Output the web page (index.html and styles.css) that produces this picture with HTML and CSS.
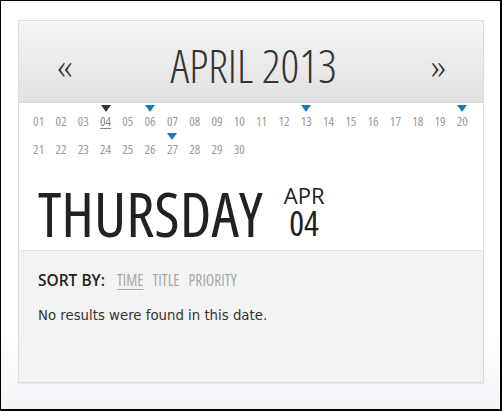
FILE: index.html
```html
<!DOCTYPE html>
<html>
<head>
<meta charset="utf-8">
<link rel="stylesheet" href="styles.css">
</head>
<body>
<div class="frame">
  <div class="card">
    <div class="header">
      <span class="nav">&laquo;</span>
      <span class="month">APRIL 2013</span>
      <span class="nav">&raquo;</span>
    </div>
    <div class="days">
      <span class="day">01</span><span class="day">02</span><span class="day">03</span><span class="day cur">04</span><span class="day">05</span><span class="day ev">06</span><span class="day">07</span><span class="day">08</span><span class="day">09</span><span class="day">10</span>
      <span class="day">11</span><span class="day">12</span><span class="day ev">13</span><span class="day">14</span><span class="day">15</span><span class="day">16</span><span class="day">17</span><span class="day">18</span><span class="day">19</span><span class="day ev">20</span>
      <span class="day">21</span><span class="day">22</span><span class="day">23</span><span class="day">24</span><span class="day">25</span><span class="day">26</span><span class="day ev">27</span><span class="day">28</span><span class="day">29</span><span class="day">30</span>
    </div>
    <div class="today">
      <span class="weekday">THURSDAY</span>
      <div class="date">
        <span class="mon">APR</span>
        <span class="num">04</span>
      </div>
    </div>
    <div class="results">
      <div class="sort">
        <span class="label">SORT BY:</span>
        <span class="opt active">TIME</span>
        <span class="opt">TITLE</span>
        <span class="opt">PRIORITY</span>
      </div>
      <p class="empty">No results were found in this date.</p>
    </div>
  </div>
</div>
</body>
</html>
```
FILE: styles.css
```css
html, body { margin: 0; padding: 0; }
body { width: 502px; height: 411px; overflow: hidden; }
.frame {
  box-sizing: border-box;
  width: 502px; height: 411px;
  border: 1px solid #000;
  border-right-width: 2px;
  border-bottom-width: 2px;
  background: linear-gradient(#ffffff 0, #ffffff 330px, #f3f5f8 100%);
  padding: 19px 16px 0 17px;
}
.card {
  width: 464px;
  height: 361px;
  border: 1px solid #dcdcdc;
  background: #fff;
  display: flex;
  flex-direction: column;
  box-shadow: 0 1px 1px rgba(0,0,0,0.05);
}
.header {
  height: 82px;
  flex: none;
  box-sizing: border-box;
  border-bottom: 1px solid #d6d6d6;
  background: linear-gradient(#f5f5f5, #e1e1e1);
  display: flex;
  align-items: center;
  justify-content: space-between;
  padding: 6px 37px 0 38px;
  font-family: "Open Sans", sans-serif;
  font-stretch: 75%;
  font-weight: 300;
  color: #333;
}
.nav { font-size: 37px; line-height: 1; padding-top: 2px; }
.month { font-size: 46px; line-height: 1; margin-left: 4px; }
.days {
  display: grid;
  flex: none;
  grid-template-columns: repeat(20, 22.3px);
  grid-auto-rows: 28px;
  padding: 10px 0 0 8.5px;
  font-family: "Open Sans", sans-serif;
  font-stretch: 75%;
  font-weight: 400;
  font-size: 13px;
  color: #9a9a9a;
}
.day { position: relative; text-align: center; line-height: 16px; }
.day.cur { text-decoration: underline; text-underline-offset: 2px; color: #888; }
.day.ev::before, .day.cur::before {
  content: "";
  position: absolute;
  top: -8px; left: 50%;
  margin-left: -5px;
  border-left: 5px solid transparent;
  border-right: 5px solid transparent;
  border-top: 7px solid #1b7ab4;
}
.day.cur::before { border-top-color: #333; }
.today {
  display: flex;
  align-items: flex-start;
  padding: 14px 0 0 19px;
  height: 84px;
  box-sizing: border-box;
  flex: none;
  border-bottom: 1px solid #e4e4e4;
  margin-top: -2px;
}
.weekday {
  font-family: "Open Sans", sans-serif;
  font-stretch: 75%;
  font-weight: 400;
  font-size: 62px;
  line-height: 64px;
  color: #222;
}
.date {
  display: flex; flex-direction: column; align-items: center;
  margin-left: 21px;
  padding-top: 3px;
  font-family: "Open Sans", sans-serif;
  color: #222;
}
.mon { font-size: 22px; line-height: 22px; }
.num { font-size: 35px; line-height: 34px; font-stretch: 87.5%; }
.results {
  flex: 1;
  background: #f3f3f3;
  padding: 18px 0 0 19px;
}
.sort { display: flex; align-items: baseline; }
.label {
  font-family: "Open Sans", sans-serif;
  font-weight: 600;
  font-size: 15.5px;
  color: #222;
  margin-right: 12px;
}
.opt {
  font-family: "Open Sans", sans-serif;
  font-stretch: 75%;
  font-weight: 400;
  font-size: 15.5px;
  color: #a8a8a8;
  margin-right: 9px;
}
.opt.active { text-decoration: underline; text-underline-offset: 3px; }
.empty {
  margin: 17px 0 0 0;
  font-family: "DejaVu Sans", sans-serif;
  font-size: 13.3px;
  color: #333;
}
```
